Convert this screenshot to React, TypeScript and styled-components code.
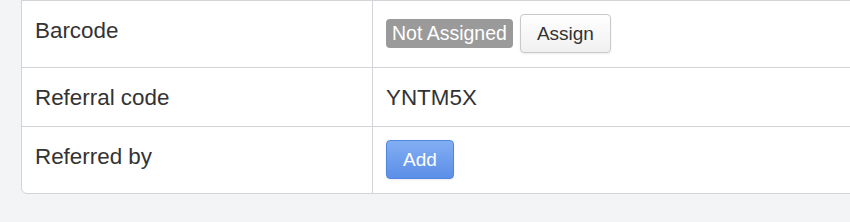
import React from 'react'
import styled, { createGlobalStyle } from 'styled-components'

const GlobalStyle = createGlobalStyle`
  html, body {
    margin: 0;
    padding: 0;
    background: #f3f4f6;
    overflow: hidden;
  }
  body {
    font-family: "Liberation Sans", Arial, Helvetica, sans-serif;
    color: #333;
  }
`

const Page = styled.div`
  padding: 0 0 0 21px;
  height: 222px;
`

const Card = styled.div`
  width: calc(100% + 20px);
  background: #fff;
  border: 1px solid #d3d3d8;
  border-radius: 0 0 0 6px;
  box-sizing: border-box;
`

const Row = styled.div<{ $first?: boolean }>`
  display: grid;
  grid-template-columns: 351px 1fr;
  border-top: ${p => (p.$first ? 'none' : '1px solid #d3d3d8')};
`

const LabelCell = styled.div`
  padding: 14px 13px 13px;
  font-size: 22.4px;
  line-height: 31px;
  border-right: 1px solid #d3d3d8;
`

const ValueCell = styled.div<{ $text?: boolean }>`
  padding: ${p => (p.$text ? '14px 13px 13px' : '13px 13px 14px')};
  font-size: 22.4px;
  line-height: 31px;
  display: flex;
  align-items: center;
  gap: 7px;
`

const Badge = styled.span`
  display: inline-block;
  background: #9a9a9a;
  color: #fff;
  font-size: 19.5px;
  line-height: 29px;
  padding: 0 6px;
  border-radius: 4px;
`

const Button = styled.button<{ $primary?: boolean }>`
  height: 39px;
  padding: 0 16px;
  font-family: "Liberation Sans", Arial, Helvetica, sans-serif;
  font-size: 19px;
  border-radius: 4px;
  cursor: pointer;
  color: ${p => (p.$primary ? '#fff' : '#333')};
  border: 1px solid ${p => (p.$primary ? '#4f86df' : '#c9c9cc')};
  background: ${p =>
    p.$primary
      ? 'linear-gradient(#82aef3, #5b8ee7)'
      : 'linear-gradient(#ffffff, #f0f0f0)'};
  box-shadow: 0 1px 2px rgba(0, 0, 0, 0.08);
`

export default function App() {
  return (
    <Page>
      <GlobalStyle />
      <Card>
        <Row $first>
          <LabelCell>Barcode</LabelCell>
          <ValueCell>
            <Badge>Not Assigned</Badge>
            <Button>Assign</Button>
          </ValueCell>
        </Row>
        <Row>
          <LabelCell>Referral code</LabelCell>
          <ValueCell $text>YNTM5X</ValueCell>
        </Row>
        <Row>
          <LabelCell>Referred by</LabelCell>
          <ValueCell>
            <Button $primary>Add</Button>
          </ValueCell>
        </Row>
      </Card>
    </Page>
  )
}
